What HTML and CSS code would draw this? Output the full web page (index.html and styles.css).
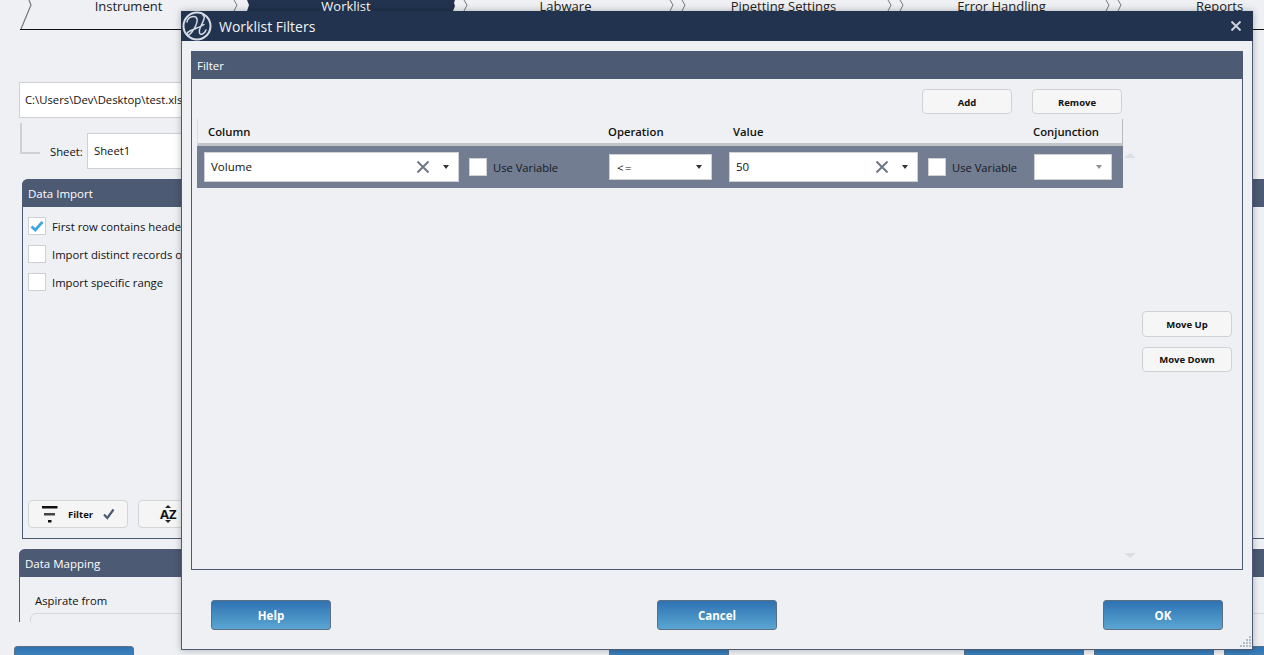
FILE: index.html
```html
<!DOCTYPE html>
<html lang="en">
<head>
<meta charset="utf-8">
<title>Worklist Filters</title>
<link rel="stylesheet" href="styles.css">
</head>
<body>
<div class="app">
  <div class="main">
    <nav class="nav">
      <div class="tab first"><svg class="chev-start" width="12" height="30" viewBox="0 0 12 30"><path d="M9 0 L11 5 L1 29" fill="none" stroke="#777" stroke-width="1.2"/></svg><span class="tab-label">Instrument</span><svg class="chev" width="6" height="12" viewBox="0 0 6 12"><path d="M1 0 L4 5 L1 11" fill="none" stroke="#777"/></svg></div>
      <div class="tab current"><span class="tab-label">Worklist</span></div>
      <div class="tab"><svg class="chev" width="6" height="12" viewBox="0 0 6 12"><path d="M1 0 L4 5 L1 11" fill="none" stroke="#777"/></svg><span class="tab-label">Labware</span><svg class="chev" width="6" height="12" viewBox="0 0 6 12"><path d="M1 0 L4 5 L1 11" fill="none" stroke="#777"/></svg></div>
      <div class="tab"><svg class="chev" width="6" height="12" viewBox="0 0 6 12"><path d="M1 0 L4 5 L1 11" fill="none" stroke="#777"/></svg><span class="tab-label">Pipetting Settings</span><svg class="chev" width="6" height="12" viewBox="0 0 6 12"><path d="M1 0 L4 5 L1 11" fill="none" stroke="#777"/></svg></div>
      <div class="tab"><svg class="chev" width="6" height="12" viewBox="0 0 6 12"><path d="M1 0 L4 5 L1 11" fill="none" stroke="#777"/></svg><span class="tab-label">Error Handling</span><svg class="chev" width="6" height="12" viewBox="0 0 6 12"><path d="M1 0 L4 5 L1 11" fill="none" stroke="#777"/></svg></div>
      <div class="tab"><svg class="chev" width="6" height="12" viewBox="0 0 6 12"><path d="M1 0 L4 5 L1 11" fill="none" stroke="#777"/></svg><span class="tab-label">Reports</span><svg class="chev" width="6" height="12" viewBox="0 0 6 12"><path d="M1 0 L4 5 L1 11" fill="none" stroke="#777"/></svg></div>
    </nav>

    <div class="file-field">C:\Users\Dev\Desktop\test.xlsx</div>

    <div class="sheet-row">
      <div class="connector"></div>
      <span class="sheet-label">Sheet:</span>
      <div class="sheet-field">Sheet1</div>
    </div>

    <section class="bg-panel import">
      <header class="bg-head">Data Import</header>
      <div class="import-body">
        <label class="opt"><span class="box"><svg width="16" height="16" viewBox="0 0 16 16"><path d="M2.5 8.5 L6.3 12 L13.5 3.8" fill="none" stroke="#3fa5e5" stroke-width="2.8"/></svg></span>First row contains headers</label>
        <label class="opt"><span class="box"></span>Import distinct records only</label>
        <label class="opt"><span class="box"></span>Import specific range</label>
        <div class="tools">
          <div class="tool filter-tool">
            <svg width="16" height="18" viewBox="0 0 16 18"><path d="M0 1h15.500v2.500H0z" fill="#111"/><path d="M2 8h11v2.500H2z" fill="#444"/><path d="M6 15h3.500v2.500H6z" fill="#111"/></svg>
            <span class="tool-text">Filter</span>
            <svg width="12" height="12" viewBox="0 0 12 12"><path d="M1 6.500 L4.300 10 L10.500 1.500" fill="none" stroke="#4c5a73" stroke-width="2.200"/></svg>
          </div>
          <div class="tool az-tool">
            <div class="az-stack">
              <svg width="6" height="3" viewBox="0 0 6 3"><path d="M3 0 L6 3 H0z" fill="#222"/></svg>
              <span class="az-text">AZ</span>
              <svg width="6" height="3" viewBox="0 0 6 3"><path d="M0 0 H6 L3 3z" fill="#222"/></svg>
            </div>
          </div>
        </div>
      </div>
    </section>

    <section class="bg-panel mapping">
      <header class="bg-head">Data Mapping</header>
      <div class="mapping-body">
        <div class="map-label">Aspirate from</div>
        <div class="map-box"></div>
      </div>
    </section>
  </div>

  <footer class="bg-foot">
    <button class="blue-btn bf-a"></button>
    <button class="blue-btn bf-b"></button>
    <button class="blue-btn bf-c"></button>
    <button class="blue-btn bf-d"></button>
    <button class="blue-btn bf-e"></button>
  </footer>

  <div class="dialog">
    <header class="dlg-title">
      <svg class="logo" width="30" height="30" viewBox="0 0 30 30"><circle cx="15" cy="15" r="13.500" fill="none" stroke="#d6dce4" stroke-width="2"/><path d="M5 11 C6 5 14 4 15 8 C16 13 10 22 7 24 C5 25 4 22 7 20.500 C11 18 17 17 22 13.500 M21 4.500 C24 5 21 11 18.500 16 C16.500 20 17 24.500 20.500 23 C22.500 22 23.500 20.500 24 19" fill="none" stroke="#d6dce4" stroke-width="1.500" stroke-linecap="round"/></svg>
      <span class="dlg-name">Worklist Filters</span>
      <svg class="close" width="10" height="10" viewBox="0 0 10 10"><path d="M0.500 0.500 L9.500 9.500 M9.500 0.500 L0.500 9.500" stroke="#ccd1da" stroke-width="2"/></svg>
    </header>

    <section class="filter-panel">
      <header class="filter-head">Filter</header>
      <div class="filter-body">
        <div class="table-area">
          <div class="add-row">
            <button class="plain-btn">Add</button>
            <button class="plain-btn">Remove</button>
          </div>
          <div class="grid-head">
            <div class="gh c-col">Column</div>
            <div class="gh c-op">Operation</div>
            <div class="gh c-val">Value</div>
            <div class="gh c-con">Conjunction</div>
          </div>
          <div class="grid-row">
            <div class="cell cell-col">
              <div class="combo combo-col"><span class="combo-text">Volume</span>
                <svg class="x-icon" width="12" height="12" viewBox="0 0 12 12"><path d="M0.500 0.500 L11.500 11.500 M11.500 0.500 L0.500 11.500" stroke="#6d7884" stroke-width="2"/></svg>
                <span class="arrow"></span></div>
              <span class="box var-box"></span><span class="var-label">Use Variable</span>
            </div>
            <div class="cell cell-op">
              <div class="combo combo-op"><span class="combo-text op-text">&lt;=</span><span class="arrow"></span></div>
            </div>
            <div class="cell cell-val">
              <div class="combo combo-val"><span class="combo-text">50</span>
                <svg class="x-icon" width="12" height="12" viewBox="0 0 12 12"><path d="M0.500 0.500 L11.500 11.500 M11.500 0.500 L0.500 11.500" stroke="#6d7884" stroke-width="2"/></svg>
                <span class="arrow"></span></div>
              <span class="box var-box"></span><span class="var-label">Use Variable</span>
            </div>
            <div class="cell cell-con">
              <div class="combo combo-con"><span class="combo-text"></span><span class="arrow dim"></span></div>
            </div>
          </div>
        </div>
        <div class="scroll-col">
          <span class="tri-up"></span>
          <span class="tri-down"></span>
        </div>
        <div class="move-col">
          <button class="plain-btn move-up">Move Up</button>
          <button class="plain-btn move-down">Move Down</button>
        </div>
      </div>
    </section>

    <footer class="dlg-foot">
      <button class="blue-btn">Help</button>
      <button class="blue-btn">Cancel</button>
      <button class="blue-btn">OK</button>
    </footer>

    <svg class="grip" width="12" height="12" viewBox="0 0 12 12" fill="#b4bbc9"><rect x="9" y="0" width="2" height="2"/><rect x="6" y="3" width="2" height="2"/><rect x="9" y="3" width="2" height="2"/><rect x="3" y="6" width="2" height="2"/><rect x="6" y="6" width="2" height="2"/><rect x="9" y="6" width="2" height="2"/><rect x="0" y="9" width="2" height="2"/><rect x="3" y="9" width="2" height="2"/><rect x="6" y="9" width="2" height="2"/><rect x="9" y="9" width="2" height="2"/></svg>
  </div>
</div>
</body>
</html>
```

FILE: styles.css
```css
* { box-sizing: border-box; }
html, body { margin: 0; padding: 0; height: 100%; overflow: hidden; }
body {
  background: #eef0f4;
  font-family: "Open Sans", "Noto Sans", sans-serif;
  font-size: 11.3px;
  color: #111;
}
button { font-family: inherit; padding: 0; margin: 0; }

.app { position: relative; width: 1264px; height: 655px; overflow: hidden; }
.main { height: 622px; overflow: hidden; display: flex; flex-direction: column; }

/* wizard nav */
.nav { display: flex; flex: none; height: 30px; margin-left: 19px; width: 1310px; position: relative; }
.nav::after { content: ""; position: absolute; left: 1px; right: 0; bottom: 0; height: 1px; background: #111; }
.tab { flex: none; width: 218px; height: 30px; display: flex; align-items: flex-start; padding: 0 1px 0 8px; font-size: 13px; color: #222; }
.tab.first { padding-left: 0; }
.tab-label { flex: 1; text-align: center; line-height: 13px; padding-right: 7px; }
.first .tab-label { padding-right: 3px; }
.chev { flex: none; }
.tab-label + .chev { margin-right: -3px; }
.chev-start { flex: none; margin-left: 1px; margin-right: -5px; }
.tab.current {
  background: #22334f; color: #fff; height: 11px; margin-left: 10px; width: 208px; padding: 0;
  clip-path: polygon(0 0, 100% 0, calc(100% - 1px) 3px, 100% 6px, calc(100% - 2px) 11px, 0 11px, 2px 5px);
}
.current .tab-label { padding-right: 10px; }

/* background fields */
.file-field {
  flex: none; margin: 52px 0 0 19px; width: 400px; height: 36px;
  background: #fff; border: 1px solid #cfd0d4; padding: 0 5px;
  line-height: 34px; white-space: nowrap;
}
.sheet-row { flex: none; display: flex; margin: 15px 0 0 20px; height: 36px; }
.connector { flex: none; width: 20px; height: 31px; margin-top: -10px; border-left: 2px solid #d0d1d5; border-bottom: 2px solid #d0d1d5; }
.sheet-label { flex: none; margin: 0 4px 0 10px; line-height: 37px; width: 33px; }
.sheet-field { width: 300px; background: #fff; border: 1px solid #cfd0d4; padding: 0 6px; line-height: 33px; }

.bg-panel { flex: none; border: 1px solid #4c5a73; border-top: 0; display: flex; flex-direction: column; width: 1300px; }
.bg-head { flex: none; height: 28px; background: #4c5a73; color: #fff; line-height: 29px; padding-left: 6px; font-size: 11.500px; border-radius: 6px 0 0 0; margin: 0 -1px; }
.import { height: 360px; margin: 10px 0 0 22px; border-radius: 6px 0 0 0; }
.import-body { flex: 1; display: flex; flex-direction: column; padding: 10px 5px; }
.opt { display: flex; align-items: center; height: 18px; margin-bottom: 10px; white-space: nowrap; }
.box { flex: none; width: 18px; height: 18px; background: #fff; border: 1px solid #cfd0d4; display: flex; align-items: center; justify-content: center; margin-right: 6px; }
.tools { margin-top: auto; display: flex; gap: 10px; }
.tool { height: 28px; width: 100px; background: #f5f5f6; border: 1px solid #d3d4d8; border-radius: 4px; display: flex; align-items: center; }
.filter-tool { padding-left: 13px; }
.tool-text { font-weight: 700; font-size: 9.500px; margin: 0 10px 0 10px; }
.az-tool { padding-left: 21px; }
.az-stack { display: flex; flex-direction: column; align-items: center; }
.az-text { font-weight: 700; font-size: 13px; line-height: 12px; color: #111; }

.mapping { margin: 10px 0 0 19px; height: 80px; border-bottom: 0; border-radius: 6px 0 0 0; }
.mapping-body { padding: 16px 10px 0; }
.map-label { margin-left: 5px; line-height: 16px; }
.map-box { height: 40px; margin-top: 4px; border: 1px solid #d6d7db; border-radius: 6px; }

.bg-foot { display: flex; margin-top: 24px; padding-left: 14px; }
.bf-b { margin-left: 475px; }
.bf-c { margin-left: 235px; }
.bf-d, .bf-e { margin-left: 10px; }
.bg-foot .blue-btn { flex: none; }

/* buttons */
.blue-btn {
  width: 120px; height: 30px;
  background: linear-gradient(#2f72b2, #5aa6d2);
  border: 1px solid #5d6f85; border-radius: 3px;
  color: #fff; font-weight: 700; font-size: 11.500px;
}
.plain-btn {
  width: 90px; height: 25px;
  background: #f6f6f7; border: 1px solid #d0d1d5; border-radius: 4px;
  font-weight: 700; font-size: 9.500px; color: #111;
  padding-top: 1px;
}

/* dialog */
.dialog {
  position: absolute; left: 181px; top: 11px; width: 1072px; height: 639px;
  background: #eef0f4; border: 1px solid #4c5a73; border-top: 0;
  box-shadow: 0 0 7px rgba(0,0,0,.28);
  display: flex; flex-direction: column;
}
.dlg-title { flex: none; height: 30px; margin: 0 -1px; background: #22334f; color: #fff; display: flex; align-items: center; padding-left: 1px; }
.logo { flex: none; }
.dlg-name { flex: 1; margin-left: 7px; font-size: 14px; color: #f1f3f6; }
.close { flex: none; margin-right: 12px; }

.filter-panel { flex: none; margin: 10px 9px 0; height: 519px; border: 1px solid #4c5a73; border-top: 0; display: flex; flex-direction: column; }
.filter-head { flex: none; height: 28px; margin: 0 -1px; background: #4c5a73; color: #fff; font-size: 11.500px; line-height: 29px; padding-left: 6px; }
.filter-body { flex: 1; display: flex; }
.table-area { flex: none; width: 931px; padding: 10px 0 0 5px; }
.add-row { display: flex; justify-content: flex-end; gap: 20px; padding-right: 1px; }
.grid-head, .grid-row { display: grid; grid-template-columns: 407px 125px 300px 94px; }
.grid-head { margin-top: 5px; height: 27px; border-bottom: 3px solid #c3c4c8; border-left: 1px solid #dcdde1; border-right: 1px solid #b9bbc0; }
.gh { font-weight: 600; font-size: 11.300px; line-height: 25px; color: #111; }
.c-col { padding-left: 10px; }
.c-op, .c-val, .c-con { padding-left: 3px; }
.grid-row { height: 42px; background: #727d91; }
.cell { display: flex; align-items: center; }
.cell-col { padding-left: 7px; }
.cell-op, .cell-con { padding-left: 5px; }
.combo { flex: none; display: flex; align-items: center; background: #fff; border: 1px solid #d0d1d5; padding: 0 9px 0 6px; }
.combo-text { flex: 1; font-size: 11.500px; color: #111; padding-bottom: 2px; }
.op-text { letter-spacing: 1.500px; padding: 1px 0 0 1px; }
.combo-col { width: 255px; height: 30px; }
.combo-val { width: 189px; height: 30px; }
.combo-op { width: 103px; height: 26px; }
.combo-con { width: 78px; height: 26px; }
.x-icon { flex: none; margin-right: 14px; }
.arrow { flex: none; width: 0; height: 0; border-left: 3.500px solid transparent; border-right: 3.500px solid transparent; border-top: 4px solid #333; }
.arrow.dim { border-top-color: #8d919a; }
.var-box { margin-left: 10px; }
.var-label { font-size: 11.200px; color: #14181f; white-space: nowrap; }
.scroll-col { flex: none; width: 14px; display: flex; flex-direction: column; justify-content: space-between; align-items: center; padding: 74px 0 11px; }
.tri-up { width: 0; height: 0; border-left: 6px solid transparent; border-right: 6px solid transparent; border-bottom: 5px solid #dcdee3; }
.tri-down { width: 0; height: 0; border-left: 6px solid transparent; border-right: 6px solid transparent; border-top: 5px solid #dcdee3; }
.move-col { flex: none; margin-left: 5px; padding-top: 232px; display: flex; flex-direction: column; gap: 10px; }
.move-up { height: 26px; }
.move-down { padding-top: 0; }

.dlg-foot { flex: none; display: flex; justify-content: space-between; padding: 0 29px; margin-top: 30px; }
.grip { position: absolute; right: 0; bottom: 1px; }
```
